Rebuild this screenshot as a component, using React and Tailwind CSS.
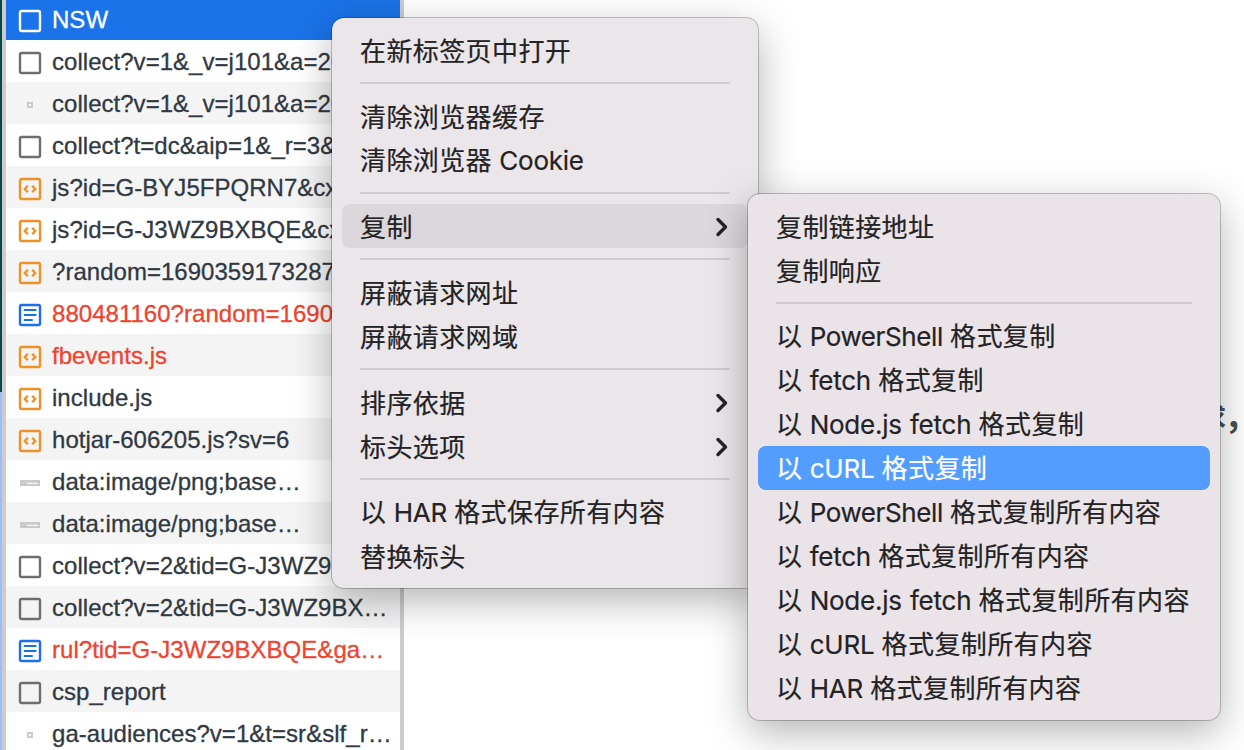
import clsx from 'clsx'

// Requests shown in the network list, top to bottom.
const requests = [
  { name: 'NSW', icon: 'box', selected: true },
  { name: 'collect?v=1&_v=j101&a=20', icon: 'box' },
  { name: 'collect?v=1&_v=j101&a=20', icon: 'pixel' },
  { name: 'collect?t=dc&aip=1&_r=3&', icon: 'box' },
  { name: 'js?id=G-BYJ5FPQRN7&cx', icon: 'script' },
  { name: 'js?id=G-J3WZ9BXBQE&cx', icon: 'script' },
  { name: '?random=1690359173287', icon: 'script' },
  { name: '880481160?random=1690', icon: 'doc', failed: true },
  { name: 'fbevents.js', icon: 'script', failed: true },
  { name: 'include.js', icon: 'script' },
  { name: 'hotjar-606205.js?sv=6', icon: 'script' },
  { name: 'data:image/png;base…', icon: 'image' },
  { name: 'data:image/png;base…', icon: 'image' },
  { name: 'collect?v=2&tid=G-J3WZ9', icon: 'box' },
  { name: 'collect?v=2&tid=G-J3WZ9BX…', icon: 'box' },
  { name: 'rul?tid=G-J3WZ9BXBQE&ga…', icon: 'doc', failed: true },
  { name: 'csp_report', icon: 'box' },
  { name: 'ga-audiences?v=1&t=sr&slf_r…', icon: 'pixel' },
]

// null is a separator.
const mainMenu = [
  { label: '在新标签页中打开' },
  null,
  { label: '清除浏览器缓存' },
  { label: '清除浏览器 Cookie' },
  null,
  { label: '复制', submenu: true, open: true },
  null,
  { label: '屏蔽请求网址' },
  { label: '屏蔽请求网域' },
  null,
  { label: '排序依据', submenu: true },
  { label: '标头选项', submenu: true },
  null,
  { label: '以 HAR 格式保存所有内容' },
  { label: '替换标头' },
]

const copyMenu = [
  { label: '复制链接地址' },
  { label: '复制响应' },
  null,
  { label: '以 PowerShell 格式复制' },
  { label: '以 fetch 格式复制' },
  { label: '以 Node.js fetch 格式复制' },
  { label: '以 cURL 格式复制', active: true },
  { label: '以 PowerShell 格式复制所有内容' },
  { label: '以 fetch 格式复制所有内容' },
  { label: '以 Node.js fetch 格式复制所有内容' },
  { label: '以 cURL 格式复制所有内容' },
  { label: '以 HAR 格式复制所有内容' },
]

const RequestIcon = ({ type, selected }) => {
  if (type === 'pixel') {
    return (
      <svg width="24" height="24" fill="none">
        <rect x="10" y="10" width="4" height="4" fill="#fff" stroke="#cbcbce" strokeWidth="2" />
      </svg>
    )
  }
  if (type === 'image') {
    return (
      <svg width="24" height="24" fill="none">
        <rect x="2" y="9" width="20" height="6" fill="#c9c9cd" />
        <path d="M4 12.5h16" stroke="#f4f4f4" strokeWidth="1.2" />
        <path d="M4 11.7h4M9 11.3h5M15 11.3h3" stroke="#dedee0" strokeWidth="0.8" />
        <path d="M4.5 12.8h4" stroke="#a4a4a6" strokeWidth="0.9" />
      </svg>
    )
  }
  const color =
    type === 'script' ? '#ee9126' : type === 'doc' ? '#1a6ef5' : selected ? '#fff' : '#6e6e6e'
  return (
    <svg width="24" height="24" fill="none" stroke={color} strokeWidth="2.4">
      <rect x="2" y="2" width="20" height="20" rx="1.5" />
      {type === 'script' && <path d="M9.8 8.8L6.8 12l3 3.2M14.2 8.8l3 3.2-3 3.2" />}
      {type === 'doc' && <path d="M5.8 7h12.6M5.8 12h12.6M5.8 17h9" strokeWidth="2" />}
    </svg>
  )
}

const RequestList = () => (
  <div className="-mt-0.5 w-[402px] shrink-0 border-x-4 border-[#cbcbd0] font-['Liberation_Sans',Arial,sans-serif] text-2xl tracking-[0.03px] [-webkit-text-stroke:0.3px]">
    {requests.map((request, index) => (
      <div
        key={index}
        className={clsx(
          'flex h-[42px] items-center overflow-hidden whitespace-nowrap pl-3 pt-0.5',
          request.selected ? 'bg-[#1a73e8]' : index % 2 ? 'bg-white' : 'bg-[#f4f4f4]',
          request.selected ? 'text-white' : request.failed ? 'text-[#ee442f]' : 'text-[#303942]'
        )}
      >
        <div className="mr-2.5 shrink-0 pt-0.5">
          <RequestIcon type={request.icon} selected={request.selected} />
        </div>
        <span>{request.name}</span>
      </div>
    ))}
  </div>
)

// Latin words get their own face, the rest stays in the CJK one.
const Label = ({ text }) =>
  text.split(/([A-Za-z.]+(?: [A-Za-z.]+)*)/).map((part, index) =>
    index % 2 ? (
      <span
        key={index}
        className={clsx(
          "font-['Inter',sans-serif]",
          part === 'PowerShell' ? 'tracking-[-0.4px]' : 'tracking-[-0.22px]'
        )}
      >
        {part}
      </span>
    ) : (
      part
    )
  )

const Menu = ({ items, className }) => (
  <div
    className={clsx(
      "absolute rounded-xl p-2.5 font-['Noto_Sans_CJK_SC',sans-serif] text-[26px] tracking-[0.4px] text-[#232224] [word-spacing:1px] [-webkit-text-stroke:0.2px]",
      'shadow-[0_0_0_1px_rgba(0,0,0,0.22),0_12px_40px_rgba(0,0,0,0.3)]',
      className
    )}
  >
    {items.map((item, index) =>
      item ? (
        <div
          key={index}
          className={clsx(
            'flex h-11 items-center justify-between whitespace-nowrap rounded-lg pl-[18px] pr-[19px] leading-[44px]',
            item.open && 'bg-[#dcd7da]',
            item.active && 'bg-[#539dff] text-white'
          )}
        >
          <span className="whitespace-pre">
            <Label text={item.label} />
          </span>
          {item.submenu && (
            <svg width="16" height="24" fill="none" className="mt-0.5">
              <path
                d="M5 4.5L12.5 12L5 19.5"
                stroke="currentColor"
                strokeWidth="3.4"
                strokeLinecap="round"
                strokeLinejoin="round"
              />
            </svg>
          )}
        </div>
      ) : (
        <div key={index} className="px-[18px] py-2.5">
          <div className="h-0.5 bg-[#cfcbce]" />
        </div>
      )
    )}
  </div>
)

const App = () => (
  <div className="relative flex h-[750px] w-[1244px] overflow-hidden bg-white">
    <div className="flex w-0.5 shrink-0 flex-col">
      <div className="h-[392px] bg-[#0b4747]" />
      <div className="flex-1 bg-[#9bbdfa]" />
    </div>
    <RequestList />
    <div className="flex flex-1 justify-end pr-[5px] pt-[393px]">
      <p className="whitespace-nowrap font-['Noto_Sans_CJK_SC',sans-serif] text-[26px] font-bold leading-10 text-[#4b4f54]">
        <span className="tracking-[2px]">求</span>
        <span className="text-[34px]">,</span>
      </p>
    </div>
    <Menu items={mainMenu} className="left-[332px] top-[18px] w-[426px] bg-[#eae6e9]" />
    <Menu items={copyMenu} className="left-[748px] top-[194px] w-[472px] bg-[#eae4e8]" />
  </div>
)

export default App
